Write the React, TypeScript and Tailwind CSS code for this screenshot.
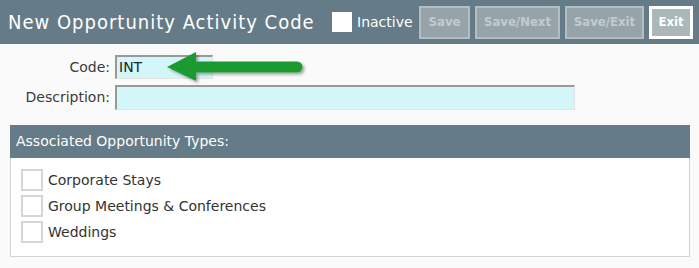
import React from 'react';

const types = ['Corporate Stays', 'Group Meetings & Conferences', 'Weddings'];

function ActionButton({ label, width, active }: { label: string; width: string; active?: boolean }) {
  return (
    <button
      className={
        (active
          ? 'border-[3px] border-white bg-[#aab8b9] text-white'
          : 'border-2 border-[#b3bec2] bg-[#96a4aa] text-[#c3cbce]') +
        ' h-[33px] text-[13px] font-bold flex items-center justify-center ' +
        width
      }
      style={{ fontFamily: '"DejaVu Sans Condensed", Tahoma, "DejaVu Sans", sans-serif' }}
    >
      {label}
    </button>
  );
}

function Arrow() {
  return (
    <svg className="absolute left-[160px] top-[46px]" width="150" height="42" viewBox="0 0 150 42">
      <defs>
        <filter id="sh" x="-10%" y="-30%" width="130%" height="180%">
          <feDropShadow dx="2" dy="2" stdDeviation="1.5" floodColor="#000" floodOpacity="0.35" />
        </filter>
      </defs>
      <g filter="url(#sh)">
        <polygon points="7,21 36,6 36,35" fill="#1f9a30" />
        <line x1="34" y1="21" x2="137" y2="21" stroke="#1f9a30" strokeWidth="11" strokeLinecap="round" />
      </g>
    </svg>
  );
}

export default function App() {
  return (
    <div
      className="w-[699px] h-[268px] bg-[#fafafa] relative overflow-hidden"
      style={{ fontFamily: 'Verdana, "DejaVu Sans", sans-serif' }}
    >
      <div className="h-[44px] bg-[#657b87] flex items-center pl-[8px] pr-[6px]">
        <h1
          className="text-white text-[20px] leading-none whitespace-nowrap tracking-[1px]"
          style={{ fontFamily: '"DejaVu Sans Condensed", "DejaVu Sans", sans-serif' }}
        >
          New Opportunity Activity Code
        </h1>
        <div className="ml-auto flex items-center">
          <div className="w-[20px] h-[20px] bg-white" />
          <span className="ml-[5px] w-[56px] text-white text-[14px]">Inactive</span>
          <div className="ml-[6px] flex gap-[5px]">
            <ActionButton label="Save" width="w-[51px]" />
            <ActionButton label="Save/Next" width="w-[85px]" />
            <ActionButton label="Save/Exit" width="w-[79px]" />
            <ActionButton label="Exit" width="w-[44px]" active />
          </div>
        </div>
      </div>

      <div className="grid grid-cols-[110px_1fr] gap-x-[5px] gap-y-[6px] mt-[11px] items-center text-[14px] text-[#3b3b3b]">
        <label className="text-right">Code:</label>
        <div className="w-[98px] h-[24px] bg-[#d3f6f9] border-t-2 border-l-2 border-[#999] border-r border-b border-r-[#e4e4e4] border-b-[#e4e4e4] pl-[2px] leading-[21px] text-[#222]">
          INT
        </div>
        <label className="text-right">Description:</label>
        <div className="w-[460px] h-[25px] bg-[#d3f6f9] border-t-2 border-l-2 border-[#999] border-r border-b border-r-[#e4e4e4] border-b-[#e4e4e4]" />
      </div>

      <Arrow />

      <div className="mx-[10px] mt-[15px] w-[680px]">
        <div className="h-[33px] bg-[#657b87] flex items-center pl-[6px] text-white text-[14px]">
          Associated Opportunity Types:
        </div>
        <div className="bg-white border border-t-0 border-[#d3d3d3] pt-[11px] pb-[13px] pl-[10px] flex flex-col gap-[4px]">
          {types.map((t) => (
            <div key={t} className="flex items-center gap-[5px]">
              <div className="w-[22px] h-[22px] border-2 border-[#d6d6d6] bg-white" />
              <span className="text-[14px] text-[#333]">{t}</span>
            </div>
          ))}
        </div>
      </div>
    </div>
  );
}
